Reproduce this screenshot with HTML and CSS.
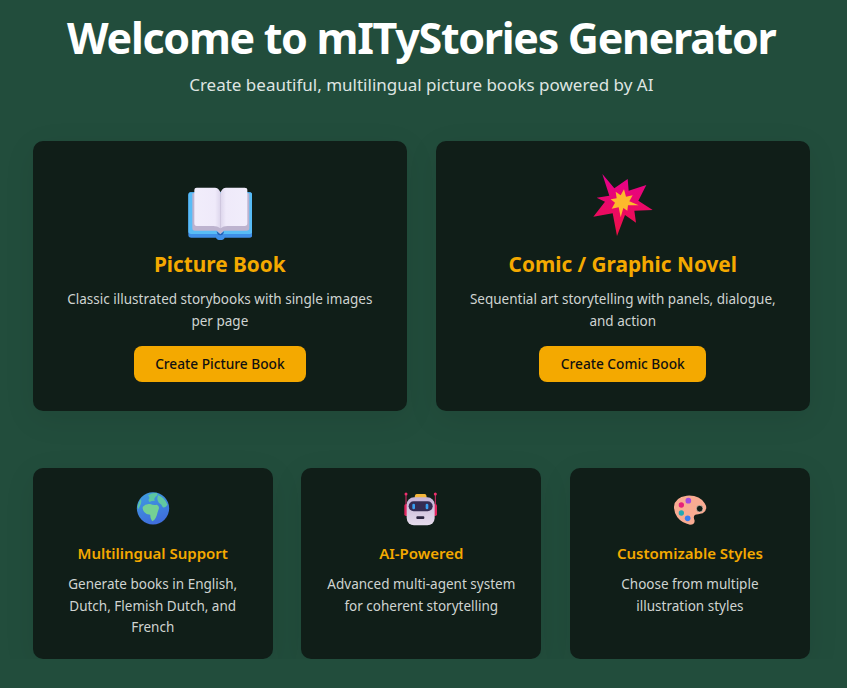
FILE: index.html
```html
<!DOCTYPE html>
<html lang="en">
<head>
    <meta charset="UTF-8">
    <meta name="viewport" content="width=device-width, initial-scale=1.0">
    <title>mITyStories Generator</title>
    <link rel="stylesheet" href="styles.css">
</head>
<body>
    <div class="page">
        <header class="hero">
            <h1>Welcome to mITyStories Generator</h1>
            <p>Create beautiful, multilingual picture books powered by AI</p>
        </header>

        <!-- Book types -->
        <section class="book-types">
            <div class="card type-card">
                <svg class="type-icon" viewBox="84 39 192 204" aria-hidden="true">
                    <defs>
                        <linearGradient id="pageLeft" x1="0" x2="1" y1="0" y2="0">
                            <stop offset="0" stop-color="#f1edfb"/>
                            <stop offset="0.8" stop-color="#efeafa"/>
                            <stop offset="1" stop-color="#ddd6ec"/>
                        </linearGradient>
                        <linearGradient id="pageRight" x1="0" x2="1" y1="0" y2="0">
                            <stop offset="0" stop-color="#ddd6ec"/>
                            <stop offset="0.2" stop-color="#efeafa"/>
                            <stop offset="1" stop-color="#f1edfb"/>
                        </linearGradient>
                    </defs>
                    <path d="M92 97 H268 Q277 97 277 106 V225 Q277 233 268 233 H194 Q192 240 181 240 Q170 240 168 233 H94 Q85 233 85 225 V106 Q85 97 92 97 Z" fill="#3f8fe8"/>
                    <path d="M92 97 H268 Q277 97 277 106 V214 Q277 222 268 222 H94 Q85 222 85 214 V106 Q85 97 92 97 Z" fill="#58bcf6"/>
                    <path d="M97 100 H268 V204 Q268 212 260 212 H192 L181 223 L170 212 H104 Q97 212 97 204 Z" fill="#bdb3cf"/>
                    <path d="M110 83 H165 Q175 83 181 96 V205 Q172 198 160 198 H110 Q103 198 103 190 V90 Q103 83 110 83 Z" fill="url(#pageLeft)"/>
                    <path d="M254 83 H198 Q188 83 182 96 V205 Q190 198 202 198 H254 Q262 198 262 190 V90 Q262 83 254 83 Z" fill="url(#pageRight)"/>
                    <path d="M170 214 L181 223 L192 214 Q191 226 181 226 Q171 226 170 214 Z" fill="#2360b8"/>
                </svg>
                <h2>Picture Book</h2>
                <p>Classic illustrated storybooks with single images per page</p>
                <a class="btn" href="#">Create Picture Book</a>
            </div>
            <div class="card type-card">
                <svg class="type-icon" viewBox="63 39 192 204" aria-hidden="true">
                    <defs>
                        <linearGradient id="burst" x1="0" x2="0" y1="0" y2="1">
                            <stop offset="0" stop-color="#e6008f"/>
                            <stop offset="1" stop-color="#ee1144"/>
                        </linearGradient>
                    </defs>
                    <polygon points="97,42 133,85 173,57 176,92 229,75 205,122 248,150 193,152 198,188 165,165 141,228 128,160 70,170 105,125 80,113 118,107" fill="url(#burst)"/>
                    <polygon points="162,88 168,110 188,106 178,124 206,136 174,136 172,152 160,144 152,172 146,142 125,146 135,128 122,118 140,115 137,95 152,106" fill="#fdb92c"/>
                </svg>
                <h2>Comic / Graphic Novel</h2>
                <p>Sequential art storytelling with panels, dialogue, and action</p>
                <a class="btn" href="#">Create Comic Book</a>
            </div>
        </section>

        <!-- Features -->
        <section class="features">
            <div class="card feature-card">
                <svg class="feature-icon" viewBox="26.5 12 120 120" aria-hidden="true">
                    <defs>
                        <linearGradient id="ocean" x1="0" x2="0.4" y1="0" y2="1">
                            <stop offset="0" stop-color="#3f9fe0"/>
                            <stop offset="1" stop-color="#3f6fdc"/>
                        </linearGradient>
                    </defs>
                    <circle cx="86.5" cy="73" r="48.5" fill="url(#ocean)"/>
                    <path d="M72 34 Q84 26 98 27 Q104 33 94 38 Q88 44 92 50 Q82 50 76 54 Q70 48 76 42 Z" fill="#5cc6a0"/>
                    <path d="M56 68 Q64 58 78 60 Q88 64 98 62 Q106 66 104 74 Q100 84 98 94 Q92 110 84 112 Q78 104 78 92 Q66 92 60 84 Q54 76 56 68 Z" fill="#74d094"/>
                    <path d="M102 34 Q120 40 130 62 Q124 72 116 70 Q112 60 104 56 Q96 46 102 34 Z" fill="#62c8a0"/>
                    <path d="M40 68 Q44 52 50 46 Q54 52 50 60 Q46 70 42 76 Z" fill="#5cc6a0"/>
                </svg>
                <h3>Multilingual Support</h3>
                <p>Generate books in English, Dutch, Flemish Dutch, and French</p>
            </div>
            <div class="card feature-card">
                <svg class="feature-icon" viewBox="25 12 120 120" aria-hidden="true">
                    <defs>
                        <linearGradient id="robotBody" x1="0" x2="0" y1="0" y2="1">
                            <stop offset="0" stop-color="#c4b2d6"/>
                            <stop offset="1" stop-color="#e6dcec"/>
                        </linearGradient>
                    </defs>
                    <path d="M40 32 V62 M128 32 V62" stroke="#d82a68" stroke-width="3" fill="none"/>
                    <circle cx="40" cy="30" r="4.5" fill="#f0306e"/>
                    <circle cx="128" cy="30" r="4.5" fill="#f0306e"/>
                    <rect x="35" y="60" width="12" height="36" rx="5" fill="#e0245e"/>
                    <rect x="121" y="60" width="12" height="36" rx="5" fill="#e0245e"/>
                    <path d="M66 42 Q66 30 72 30 H96 Q102 30 102 42 Z" fill="#f4b63a"/>
                    <rect x="42" y="40" width="84" height="84" rx="22" fill="url(#robotBody)"/>
                    <rect x="48" y="52" width="72" height="30" rx="15" fill="#352c52"/>
                    <rect x="59" y="59" width="8" height="17" rx="4" fill="#3aa0f0"/>
                    <rect x="99" y="59" width="8" height="17" rx="4" fill="#3aa0f0"/>
                    <rect x="71" y="97" width="24" height="8" rx="3" fill="#2b2440"/>
                </svg>
                <h3>AI-Powered</h3>
                <p>Advanced multi-agent system for coherent storytelling</p>
            </div>
            <div class="card feature-card">
                <svg class="feature-icon" viewBox="30 12 120 120" aria-hidden="true">
                    <path d="M42 68 Q44 40 80 35 Q118 32 134 58 Q146 76 128 88 Q112 92 106 92 Q98 96 104 110 Q104 122 90 122 Q66 118 52 100 Q42 86 42 68 Z" fill="#f8ab92"/>
                    <circle cx="119" cy="74" r="10" fill="#101e18" stroke="#fbd9cc" stroke-width="2"/>
                    <circle cx="85" cy="50" r="8.5" fill="#a34adf"/>
                    <circle cx="64" cy="63" r="8" fill="#e6207a"/>
                    <circle cx="64" cy="87" r="8" fill="#22a8b4"/>
                    <circle cx="83" cy="103" r="8.5" fill="#3a7cf0"/>
                </svg>
                <h3>Customizable Styles</h3>
                <p>Choose from multiple illustration styles</p>
            </div>
        </section>
    </div>
</body>
</html>
```

FILE: styles.css
```css
:root {
    --bg-color: #224d3c;
    --card-color: #101e18;
    --accent-color: #f4a900;
    --text-color: #cfd4d1;
}

* {
    box-sizing: border-box;
}

body {
    margin: 0;
    background-color: var(--bg-color);
    font-family: 'Noto Sans', 'Open Sans', sans-serif;
    overflow: hidden;
}

.page {
    padding: 0 37.2px 0 32.8px;
}

.hero {
    text-align: center;
    padding-top: 8px;
    margin-bottom: 41px;
}

.hero h1 {
    margin: 0;
    font-size: 43px;
    line-height: 60px;
    font-weight: 700;
    letter-spacing: -1.3px;
    color: #ffffff;
}

.hero p {
    margin: 2px 0 0;
    font-size: 17px;
    line-height: 30px;
    color: #dfe5e2;
}

.card {
    background-color: var(--card-color);
    border-radius: 10px;
    box-shadow: 0 8px 32px rgba(0, 0, 0, 0.08);
    text-align: center;
}

.book-types {
    display: grid;
    grid-template-columns: 1fr 1fr;
    gap: 28.8px;
    margin-bottom: 57px;
}

.type-card {
    height: 270px;
    padding: 32px 29px 0;
}

.type-icon {
    display: block;
    width: 64px;
    height: 68px;
    margin: 0 auto;
}

.type-card h2 {
    margin: 8px 0 0;
    font-size: 20.8px;
    line-height: 30px;
    font-weight: 700;
    color: var(--accent-color);
}

.type-card p {
    margin: 9px 0 0;
    font-size: 13.5px;
    line-height: 22px;
    color: var(--text-color);
}

.btn {
    display: inline-block;
    margin-top: 14px;
    padding: 0 21.6px;
    height: 36px;
    line-height: 36px;
    border-radius: 8px;
    background-color: var(--accent-color);
    color: #101010;
    font-size: 13.7px;
    font-weight: 500;
    text-decoration: none;
}

.features {
    display: grid;
    grid-template-columns: repeat(3, 1fr);
    gap: 28.8px;
}

.feature-card {
    height: 191px;
    padding: 20px 20px 0;
}

.feature-icon {
    display: block;
    width: 40px;
    height: 40px;
    margin: 0 auto;
}

.feature-card h3 {
    margin: 13px 0 0;
    font-size: 15px;
    line-height: 24px;
    font-weight: 600;
    color: var(--accent-color);
}

.feature-card p {
    margin: 9px 0 0;
    font-size: 13.5px;
    line-height: 21.6px;
    color: var(--text-color);
}
```
